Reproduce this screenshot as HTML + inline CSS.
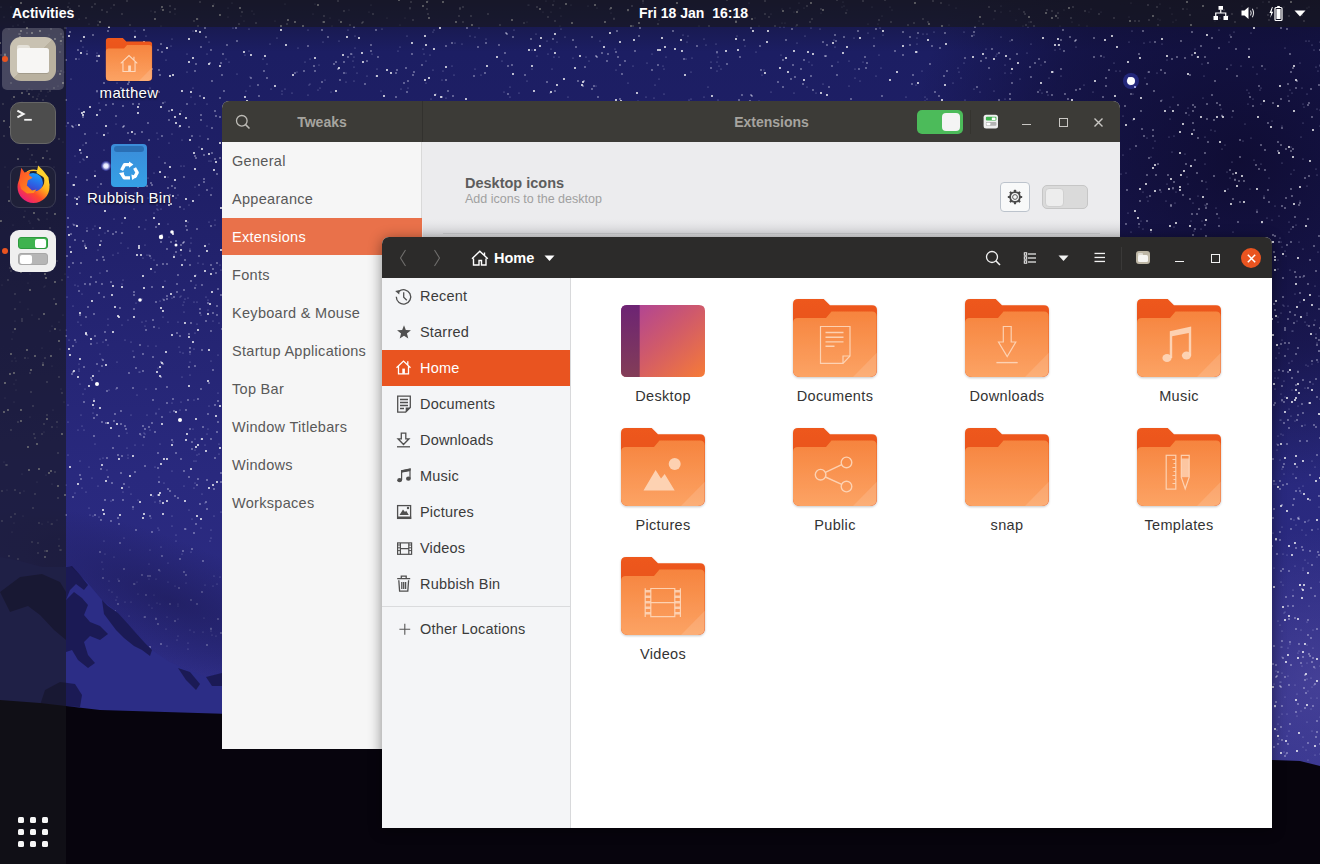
<!DOCTYPE html>
<html><head><meta charset="utf-8">
<style>
*{box-sizing:border-box;margin:0;padding:0}
html,body{width:1320px;height:864px;overflow:hidden;background:#1b1950;font-family:"Liberation Sans",sans-serif}
.abs{position:absolute}
#bg{position:absolute;left:0;top:0}
#topbar{position:absolute;left:0;top:0;width:1320px;height:27px;background:rgba(24,24,28,.62);color:#fff;font-weight:bold;font-size:14px}
#dock{position:absolute;left:0;top:27px;width:66px;height:837px;background:rgba(24,24,28,.6)}
.win{position:absolute;border-radius:7px 7px 0 0;overflow:hidden}
.t{position:absolute;white-space:nowrap}
.dlbl{width:100px;text-align:center;font-size:15px;color:#fff;letter-spacing:.3px;text-shadow:0 1px 2px rgba(0,0,0,.9)}
.lbl{width:160px;text-align:center;font-size:14.5px;color:#333;letter-spacing:.35px;margin-top:2px}
.fs{left:38px;height:36px;line-height:36px;font-size:14.5px;color:#3b3b3b;letter-spacing:.2px}
.side{left:10px;height:38px;line-height:38px;font-size:14.5px;color:#595959;letter-spacing:.3px}
</style></head>
<body>
<svg width="0" height="0" style="position:absolute">
<defs>
<linearGradient id="fb" x1="0" y1="0" x2="0" y2="1"><stop offset="0" stop-color="#ee581b"/><stop offset="1" stop-color="#e0501a"/></linearGradient>
<linearGradient id="ff" x1="0" y1="0" x2="0" y2="1"><stop offset="0" stop-color="#f6843e"/><stop offset="1" stop-color="#fca364"/></linearGradient>
<linearGradient id="dg" x1="0" y1="0" x2="1" y2="1"><stop offset="0" stop-color="#a93f9e"/><stop offset=".5" stop-color="#d05a6a"/><stop offset="1" stop-color="#f67b37"/></linearGradient>
<linearGradient id="dl" x1="0" y1="0" x2="0" y2="1"><stop offset="0" stop-color="#6d2474"/><stop offset="1" stop-color="#833d57"/></linearGradient>
<filter id="fsh" x="-10%" y="-10%" width="120%" height="125%"><feDropShadow dx="0" dy="1" stdDeviation="1.1" flood-color="#000" flood-opacity=".22"/></filter>
<symbol id="fold" viewBox="0 0 84 80" overflow="visible">
<g filter="url(#fsh)">
<path d="M0 5Q0 0 5 0H30.7L37 6.3H79Q84 6.3 84 11.3V71Q84 78 77 78H7Q0 78 0 71Z" fill="url(#fb)"/>
<path d="M0 24Q0 19 5 19H33L38.5 12.5H79Q83.6 12.5 83.6 17.5V71Q83.6 78 76.6 78H7Q0 78 0 71Z" fill="url(#ff)"/>
</g>
<path d="M84 53.5V71Q84 78 77 78H60Z" fill="#fff" fill-opacity=".13"/>
</symbol>
</defs></svg>
<svg id="bg" width="1320" height="864" viewBox="0 0 1320 864">
<defs>
<linearGradient id="sky" x1="0" y1="0" x2="0" y2="864" gradientUnits="userSpaceOnUse">
<stop offset="0" stop-color="#15163f"/>
<stop offset=".06" stop-color="#1c1e63"/>
<stop offset=".2" stop-color="#1f1f66"/>
<stop offset=".4" stop-color="#252574"/>
<stop offset=".55" stop-color="#29297e"/>
<stop offset=".75" stop-color="#2c2b82"/>
<stop offset=".88" stop-color="#34338c"/>
<stop offset="1" stop-color="#34338c"/>
</linearGradient>
<radialGradient id="dk" cx="1240" cy="160" r="330" gradientUnits="userSpaceOnUse"><stop offset="0" stop-color="#0d0a2c" stop-opacity=".85"/><stop offset=".6" stop-color="#0d0a2c" stop-opacity=".5"/><stop offset="1" stop-color="#0d0a2c" stop-opacity="0"/></radialGradient>
<radialGradient id="mw" cx="1320" cy="680" r="150" gradientUnits="userSpaceOnUse"><stop offset="0" stop-color="#5a52a8" stop-opacity=".5"/><stop offset="1" stop-color="#5a52a8" stop-opacity="0"/></radialGradient>
<radialGradient id="hz"><stop offset="0" stop-color="#1a1850" stop-opacity=".55"/><stop offset="1" stop-color="#1a1850" stop-opacity="0"/></radialGradient>
</defs>
<rect width="1320" height="864" fill="url(#sky)"/>
<rect width="1320" height="864" fill="url(#dk)"/>
<rect width="1320" height="864" fill="url(#mw)"/>
<path d="M596 86h0M187 54h0M863 62h0M823 84h0M79 19h0M308 30h0M537 56h0M934 32h0M510 97h0M282 94h0M554 57h0M1028 27h0M1001 12h0M249 51h0M401 89h0M847 10h0M434 30h0M98 21h0M241 16h0M1079 25h0M797 43h0M387 18h0M811 28h0M588 6h0M372 54h0M771 14h0M925 97h0M790 8h0M964 32h0M99 55h0M1188 74h0M112 48h0M1150 42h0M874 38h0M804 8h0M111 76h0M410 9h0M1061 76h0M1215 21h0M655 85h0M597 8h0M313 14h0M1299 12h0M1265 69h0M1087 26h0M997 54h0M1120 71h0M171 46h0M431 99h0M953 83h0M282 91h0M346 73h0M643 3h0M442 80h0M764 70h0M692 58h0M543 12h0M799 3h0M161 9h0M355 48h0M816 93h0M927 99h0M807 87h0M1176 20h0M1172 14h0M717 71h0M532 69h0M1203 98h0M664 69h0M1060 49h0M1195 49h0M244 21h0M1307 94h0M277 38h0M475 37h0M798 10h0M369 12h0M1010 41h0M1320 65h0M1005 99h0M151 11h0M339 41h0M1005 65h0M876 76h0M18 25h0M949 25h0M191 97h0M551 12h0M481 75h0M1257 74h0M994 19h0M663 66h0M1160 4h0M13 26h0M367 76h0M454 75h0M560 26h0M430 55h0M565 37h0M1076 47h0M868 33h0M486 39h0M1104 57h0M1072 22h0M718 57h0M860 81h0M111 8h0M1187 9h0M446 98h0M652 54h0M1127 81h0M1173 97h0M691 72h0M557 42h0M561 29h0M855 78h0M1204 76h0M771 92h0M785 23h0M1019 9h0M527 22h0M1049 78h0M868 24h0M352 54h0M755 18h0M1084 85h0M1132 31h0M550 93h0M1031 44h0M717 53h0M1316 67h0M475 69h0M881 68h0M745 46h0M1130 85h0M996 56h0M339 20h0M1091 9h0M821 13h0M782 9h0M1224 14h0M699 26h0M452 66h0M1318 71h0M749 3h0M611 13h0M794 12h0M381 91h0M1001 37h0M245 55h0M600 41h0M812 65h0M209 42h0M536 34h0M71 79h0M532 50h0M1089 12h0M687 42h0M320 88h0M628 11h0M719 66h0M1144 43h0M1160 20h0M267 64h0M1253 99h0M1148 72h0M1167 60h0M1290 90h0M880 28h0M97 92h0M559 57h0M376 76h0M237 74h0M246 91h0M423 49h0M1020 79h0M796 26h0M1131 3h0M193 31h0M117 83h0M922 71h0M689 100h0M318 90h0M560 8h0M1129 42h0M1249 93h0M52 41h0M325 80h0M647 63h0M479 28h0M519 93h0M355 36h0M961 78h0M1011 73h0M315 4h0M678 13h0M706 45h0M510 87h0M285 4h0M986 49h0M872 7h0M737 36h0M1261 88h0M878 24h0M980 92h0M41 71h0M717 62h0M504 92h0M407 36h0M198 19h0M349 10h0M906 97h0M974 89h0M820 29h0M1285 48h0M834 40h0M64 72h0M965 100h0M1129 17h0M1056 15h0M1162 44h0M638 101h0M1309 41h0M249 29h0M1312 45h0M232 3h0M83 47h0M527 81h0M331 92h0M784 27h0M979 21h0M721 69h0M462 44h0M528 5h0M424 54h0M27 18h0M568 97h0M659 79h0M1251 33h0M1027 53h0M666 57h0M756 52h0M1306 41h0M994 91h0M309 85h0M332 26h0M683 35h0M708 87h0M646 97h0M1284 7h0M49 35h0M1101 12h0M615 49h0M1157 73h0M275 21h0M226 59h0M805 36h0M11 7h0M1016 20h0M298 48h0M323 42h0M883 35h0M882 16h0M633 66h0M925 101h0M1320 66h0M127 80h0M1247 90h0M704 11h0M398 51h0M89 24h0M229 62h0M546 1h0M207 54h0M849 86h0M514 30h0M353 61h0M426 83h0M916 85h0M854 38h0M377 69h0M433 32h0M1041 65h0M843 2h0M552 69h0M228 8h0M1058 45h0M879 55h0M150 88h0M548 54h0M428 1h0M433 70h0M759 26h0M1060 26h0M135 31h0M1064 10h0M974 35h0M146 36h0M1048 95h0M1023 26h0M357 73h0M1241 66h0M408 88h0M1253 67h0M716 44h0M659 20h0M551 49h0M443 71h0M1288 96h0M1133 94h0M809 62h0M114 52h0M1263 2h0M686 59h0M1 7h0M688 36h0M1229 42h0M292 93h0M1158 19h0M87 51h0M1320 42h0M1197 57h0M628 83h0M69 3h0M561 16h0M271 89h0M1230 35h0M187 72h0M254 14h0M193 88h0M958 68h0M405 18h0M1250 8h0M529 5h0M60 41h0M1055 50h0M614 18h0M308 95h0M310 59h0M927 34h0M844 6h0M66 28h0M310 84h0M135 36h0M664 94h0M1292 93h0M400 25h0M1231 65h0M1300 63h0M1145 78h0M297 72h0M30 16h0M305 62h0M616 70h0M855 69h0M436 94h0M400 47h0M1309 7h0M263 59h0M547 41h0M1042 93h0M554 1h0M250 77h0M354 81h0M1288 96h0M1260 90h0M917 44h0M1314 50h0M964 63h0M1302 88h0M762 75h0M270 44h0M1170 8h0M455 43h0M79 59h0M718 100h0M892 10h0M571 5h0M330 18h0M1202 64h0M923 34h0M1116 71h0M1040 90h0M1093 92h0M285 89h0M949 5h0M704 39h0M233 28h0M1029 22h0M470 36h0M1219 30h0M228 17h0M759 101h0M119 51h0M1162 100h0M1307 8h0M781 55h0M24 22h0M691 99h0M346 82h0M1001 6h0M959 72h0M838 62h0M654 98h0M780 27h0M890 7h0M917 38h0M1234 32h0M161 26h0M849 61h0M956 8h0M172 39h0M1114 63h0M1005 73h0M214 4h0M319 65h0M794 93h0M782 23h0M252 11h0M97 53h0M52 62h0M382 29h0M1220 11h0M348 30h0M990 79h0M1010 11h0M656 9h0M573 58h0M426 61h0M354 67h0M250 86h0M502 61h0M842 7h0M354 57h0M711 62h0M166 60h0M1278 6h0M1242 6h0M835 47h0M704 97h0M586 57h0M1173 22h0M4 17h0M175 14h0M589 61h0M371 5h0M129 487h0M195 483h0M99 371h0M207 434h0M202 494h0M138 151h0M97 133h0M218 355h0M208 429h0M154 213h0M198 263h0M105 233h0M158 368h0M219 323h0M191 238h0M68 277h0M190 354h0M134 209h0M85 244h0M80 273h0M80 162h0M84 160h0M66 330h0M83 159h0M212 188h0M123 280h0M208 300h0M218 393h0M84 430h0M68 422h0M95 444h0M73 306h0M160 503h0M93 516h0M201 315h0M119 196h0M159 409h0M144 433h0M194 461h0M159 482h0M159 157h0M78 286h0M146 321h0M168 224h0M86 492h0M169 143h0M169 237h0M89 508h0M93 413h0M172 471h0M174 255h0M135 445h0M90 515h0M194 349h0M93 229h0M121 243h0M109 390h0M156 413h0M191 243h0M108 325h0M75 156h0M75 285h0M181 111h0M157 133h0M146 389h0M178 322h0M67 297h0M98 486h0M142 299h0M215 225h0M79 109h0M163 317h0M176 198h0M143 445h0M76 225h0M66 485h0M103 458h0M81 325h0M127 433h0M151 258h0M199 195h0M145 245h0M203 264h0M99 103h0M196 275h0M87 228h0M128 320h0M195 439h0M185 299h0M149 255h0M184 302h0M145 434h0M155 272h0M172 403h0M83 145h0M81 415h0M158 210h0M98 187h0M120 179h0M184 209h0M157 209h0M114 148h0M157 205h0M82 426h0M206 297h0M123 492h0M102 359h0M125 340h0M220 265h0M178 195h0M104 150h0M205 445h0M195 104h0M188 298h0M181 402h0M90 285h0M80 384h0M122 170h0M94 399h0M80 461h0M78 430h0M219 444h0M163 299h0M134 199h0M182 140h0M82 294h0M183 305h0M158 139h0M107 470h0M79 371h0M199 147h0M189 205h0M200 136h0M197 455h0M147 255h0M133 351h0M181 166h0M128 455h0M69 340h0M148 178h0M197 324h0M148 346h0M207 104h0M76 342h0M146 220h0M150 430h0M190 375h0M195 450h0M131 494h0M155 467h0M147 415h0M108 345h0M131 415h0M137 395h0M172 516h0M94 408h0M113 255h0M118 253h0M190 249h0M133 509h0M117 362h0M68 405h0M156 414h0M182 377h0M194 400h0M184 486h0M114 219h0M127 448h0M168 322h0M160 301h0M73 224h0M66 126h0M142 199h0M92 478h0M188 222h0M130 176h0M208 310h0M168 177h0M95 171h0M207 126h0M211 161h0M215 220h0M183 353h0M95 226h0M190 362h0M85 389h0M219 454h0M108 133h0M213 321h0M209 222h0M116 124h0M195 187h0M122 284h0M221 512h0M161 209h0M121 159h0M143 258h0M140 372h0M214 516h0M172 134h0M181 296h0M122 223h0M154 173h0M111 501h0M128 150h0M82 488h0M103 342h0M128 248h0M153 496h0M160 444h0M79 364h0M211 361h0M145 326h0M100 273h0M100 354h0M159 328h0M201 439h0M139 372h0M133 177h0M197 302h0M136 303h0M180 297h0M209 244h0M141 435h0M165 102h0M172 298h0M192 519h0M194 488h0M159 477h0M179 347h0M76 125h0M145 229h0M189 510h0M173 442h0M122 325h0M79 369h0M151 518h0M116 389h0M156 346h0M199 454h0M99 517h0M68 455h0M131 342h0M108 319h0M83 394h0M221 270h0M184 312h0M181 255h0M196 285h0M83 112h0M97 343h0M100 459h0M184 166h0M154 260h0M196 461h0M75 493h0M99 235h0M135 193h0M165 196h0M142 322h0M128 458h0M209 406h0M194 302h0M193 429h0M155 502h0M138 500h0M180 410h0M179 127h0M209 161h0M98 250h0M165 281h0M148 198h0M195 333h0M205 503h0M164 483h0M78 322h0M89 467h0M180 352h0M170 412h0M109 590h0M211 538h0M168 563h0M220 577h0M186 583h0M216 636h0M214 576h0M102 562h0M125 602h0M114 557h0M167 617h0M186 529h0M191 552h0M204 618h0M188 649h0M176 541h0M160 604h0M150 550h0M139 638h0M201 528h0M188 643h0M149 605h0M168 582h0M104 541h0M104 541h0M103 569h0M176 535h0M129 616h0M109 581h0M182 554h0M158 528h0M124 538h0M210 541h0M203 632h0M152 608h0M217 584h0M136 636h0M205 585h0M156 579h0M149 579h0M149 564h0M178 636h0M213 586h0M172 526h0M166 629h0M117 597h0M167 646h0M156 618h0M178 606h0M211 631h0M175 586h0M211 530h0M138 594h0M211 628h0M194 632h0M144 617h0M177 640h0M112 592h0M118 579h0M178 604h0M212 635h0M116 600h0M132 644h0M157 603h0M159 530h0M135 584h0M161 547h0M131 602h0M154 595h0M130 550h0M178 619h0M160 571h0M105 554h0M190 630h0M137 582h0M1130 149h0M1235 179h0M1211 130h0M1320 110h0M1291 229h0M1198 196h0M1219 218h0M1289 222h0M1303 159h0M1301 137h0M1185 154h0M1123 116h0M1194 231h0M1191 221h0M1175 203h0M1147 197h0M1148 201h0M1222 115h0M1151 232h0M1187 177h0M1304 107h0M1282 126h0M1228 189h0M1205 205h0M1172 152h0M1320 126h0M1272 121h0M1201 229h0M1126 173h0M1123 155h0M1269 178h0M1173 189h0M1232 117h0M1291 147h0M1245 124h0M1188 184h0M1170 119h0M1215 131h0M1205 137h0M1317 109h0M1282 163h0M1193 203h0M1294 170h0M1267 218h0M1202 221h0M1262 223h0M1264 196h0M1303 123h0M1316 169h0M1169 137h0M1279 216h0M1296 225h0M1143 229h0M1254 160h0M1300 201h0M1275 206h0M1121 174h0M1143 192h0M1222 149h0M1188 108h0M1307 186h0M1227 172h0M1303 104h0M1128 213h0M1221 109h0M1133 120h0M1155 141h0M1216 208h0M1272 220h0M1257 210h0M1153 148h0M1147 138h0M1161 192h0M1151 157h0M1205 164h0M1230 178h0M1176 192h0M1291 174h0M1189 115h0M1317 175h0M1248 104h0M1174 227h0M1141 221h0M1243 141h0M1139 227h0M1232 162h0M1170 107h0M1233 232h0M1289 232h0M1251 138h0M1131 232h0M1174 136h0M1206 182h0M1166 201h0M1206 206h0M1225 145h0M1167 184h0M1261 104h0M1207 189h0M1250 189h0M1261 164h0M1288 349h0M1282 247h0M1275 371h0M1285 697h0M1307 313h0M1318 362h0M1308 691h0M1307 679h0M1281 647h0M1305 560h0M1283 554h0M1308 760h0M1281 582h0M1303 277h0M1288 648h0M1292 331h0M1301 493h0M1311 709h0M1299 488h0M1297 321h0M1293 474h0M1291 416h0M1306 535h0M1278 269h0M1285 397h0M1284 306h0M1313 630h0M1278 436h0M1311 698h0M1316 334h0M1277 730h0M1280 682h0M1276 484h0M1303 486h0M1307 663h0M1302 666h0M1317 557h0M1305 425h0M1298 519h0M1282 673h0M1278 260h0M1319 296h0M1278 317h0M1289 409h0M1296 525h0M1303 249h0M1281 420h0M1318 529h0M1305 322h0M1312 731h0M1295 566h0M1294 520h0M1307 315h0M1306 365h0M1274 684h0M1292 361h0M1300 302h0M1287 736h0M1319 351h0M1295 685h0M1320 582h0M1307 325h0M1295 294h0M1303 570h0M1275 707h0M1297 694h0M1281 682h0M1274 568h0M1282 657h0M1282 527h0M1284 474h0M1275 378h0M1279 353h0M1282 340h0M1299 651h0M1284 752h0M1311 678h0M1285 251h0M1282 714h0M1315 286h0M1290 644h0M1289 363h0M1283 305h0M1302 530h0M1317 698h0M1278 621h0M1306 750h0M1303 747h0M1307 645h0M1281 242h0M1319 507h0M1318 252h0M1283 585h0M1287 714h0M1286 754h0M1320 399h0M1285 612h0M1277 450h0M1312 364h0M1290 270h0M1308 366h0M1312 687h0M1298 371h0M1280 460h0M1282 631h0M1308 563h0M1305 388h0M1287 555h0M1313 648h0M1273 533h0M1282 469h0M1309 606h0M1314 685h0M1301 711h0M1283 435h0M1288 306h0M1303 568h0M1276 671h0M1307 622h0M1281 434h0M1315 755h0M1297 716h0M1278 322h0M1274 484h0M1282 647h0M1284 613h0M1293 331h0M1313 384h0M1317 343h0M1299 517h0M1293 590h0M1279 717h0M1295 421h0M1292 390h0M1278 378h0M1315 467h0M1315 320h0M1307 722h0M1303 737h0M1280 420h0M1320 717h0M1286 256h0M1280 625h0M1308 521h0M1284 381h0M1315 668h0M1298 406h0M1288 676h0M1309 520h0M1280 238h0M1279 739h0M1275 389h0M1281 313h0M1320 754h0M1278 724h0M1301 630h0M1281 394h0M1312 461h0M1277 444h0M1279 348h0M1282 401h0M1276 358h0M1289 731h0M1299 242h0M1298 653h0M1320 666h0M38 262h0M42 105h0M23 231h0M14 402h0M23 516h0M47 219h0M50 141h0M52 484h0M12 361h0M52 206h0M17 111h0M57 427h0M22 102h0M42 253h0M64 402h0M51 524h0M58 71h0M59 322h0M44 432h0M12 339h0M60 349h0M58 86h0M52 326h0M14 523h0M63 315h0M16 361h0M32 315h0M34 103h0M18 257h0M30 223h0M39 94h0M48 522h0M50 331h0M24 491h0M12 532h0M9 29h0M43 77h0M38 127h0M41 177h0M53 410h0M38 235h0M61 44h0M16 390h0M13 225h0M54 167h0M14 384h0M47 89h0M30 417h0M44 287h0M45 286h0M22 474h0M29 89h0M15 358h0M47 62h0M61 389h0M37 58h0M29 233h0M13 332h0M28 358h0M46 96h0M42 524h0M42 348h0M33 228h0M42 254h0M32 90h0M65 274h0M29 221h0M25 211h0M37 251h0M2 285h0M54 198h0M30 274h0M7 490h0M18 124h0M50 207h0M57 520h0M28 283h0M60 330h0M46 475h0M28 192h0M48 92h0M51 251h0M38 96h0M5 167h0M16 380h0M59 539h0M52 190h0M52 366h0M4 462h0M63 315h0M36 240h0M46 236h0M12 99h0M46 266h0M30 159h0M37 482h0M5 398h0M20 302h0M8 187h0M15 321h0M63 142h0M28 309h0" stroke="#d8dcff" stroke-width="1.2" stroke-linecap="round" stroke-opacity=".5"/><path d="M597 57h0M1047 10h0M786 40h0M791 79h0M874 46h0M1012 40h0M620 99h0M411 2h0M933 1h0M553 39h0M555 21h0M598 97h0M1099 14h0M259 96h0M144 52h0M315 71h0M555 91h0M989 7h0M122 14h0M1219 48h0M1047 92h0M1311 89h0M304 71h0M1030 67h0M338 1h0M224 91h0M658 24h0M879 20h0M939 96h0M1085 11h0M363 22h0M505 53h0M367 61h0M25 14h0M251 78h0M832 66h0M236 28h0M811 76h0M115 94h0M1052 95h0M1290 54h0M460 8h0M452 43h0M1109 70h0M87 54h0M1215 81h0M448 91h0M693 11h0M256 23h0M162 52h0M947 71h0M1208 63h0M1192 32h0M175 9h0M128 84h0M127 58h0M930 64h0M765 14h0M102 10h0M616 52h0M1114 18h0M427 9h0M1297 81h0M1075 41h0M1161 70h0M93 35h0M65 28h0M130 25h0M750 101h0M882 96h0M1228 16h0M807 6h0M412 54h0M865 57h0M836 41h0M70 32h0M66 100h0M97 91h0M60 10h0M471 16h0M585 67h0M793 65h0M635 51h0M1035 63h0M923 19h0M727 64h0M639 36h0M1106 78h0M110 57h0M108 31h0M373 14h0M1212 95h0M578 81h0M328 37h0M118 46h0M129 82h0M446 46h0M935 92h0M999 100h0M324 16h0M903 32h0M622 74h0M413 20h0M287 24h0M1181 41h0M633 26h0M1154 91h0M1155 42h0M128 48h0M1250 97h0M410 8h0M863 1h0M940 48h0M1190 15h0M1237 76h0M620 65h0M237 41h0M43 100h0M537 7h0M1012 83h0M20 40h0M736 21h0M1192 55h0M1025 14h0M761 70h0M121 88h0M740 57h0M222 75h0M406 68h0M348 57h0M1205 57h0M992 49h0M1106 86h0M1158 25h0M1161 101h0M760 46h0M322 30h0M227 45h0M1076 40h0M914 23h0M41 91h0M428 14h0M258 85h0M404 83h0M442 97h0M548 17h0M159 70h0M239 24h0M792 29h0M508 94h0M79 6h0M592 89h0M200 2h0M1064 51h0M1031 77h0M500 25h0M912 84h0M81 41h0M1302 15h0M121 56h0M1231 37h0M1220 18h0M1235 22h0M1031 22h0M617 31h0M1139 21h0M553 5h0M27 33h0M594 86h0M344 73h0M194 21h0M1068 99h0M1034 26h0M158 50h0M506 33h0M928 22h0M267 78h0M407 92h0M159 92h0M396 73h0M95 4h0M1177 57h0M1076 90h0M507 34h0M365 84h0M1061 69h0M1 55h0M104 83h0M414 72h0M210 63h0M1063 30h0M658 65h0M1080 89h0M149 46h0M53 63h0M1148 5h0M525 75h0M334 64h0M945 33h0M1094 57h0M846 13h0M1058 13h0M354 27h0M1149 20h0M408 81h0M295 73h0M1010 99h0M891 22h0M1101 56h0M751 28h0M362 23h0M68 7h0M885 0h0M547 82h0M867 63h0M711 68h0M474 76h0M350 25h0M1236 49h0M13 14h0M513 37h0M1070 37h0M467 28h0M459 16h0M995 11h0M1073 7h0M196 64h0M813 90h0M160 75h0M576 47h0M697 46h0M783 60h0M201 47h0M974 32h0M1149 72h0M97 56h0M1157 7h0M1071 18h0M1304 21h0M739 100h0M20 34h0M170 12h0M972 36h0M155 12h0M1257 8h0M981 61h0M844 37h0M371 45h0M783 87h0M138 66h0M1183 9h0M478 47h0M1281 99h0M684 59h0M488 14h0M1038 92h0M1024 12h0M206 37h0M673 31h0M1026 25h0M596 56h0M1052 11h0M344 11h0M1224 10h0M486 43h0M508 66h0M941 3h0M643 1h0M804 60h0M242 12h0M70 9h0M778 82h0M524 23h0M1320 50h0M825 56h0M765 1h0M499 45h0M1103 97h0M205 28h0M41 44h0M264 71h0M652 70h0M195 71h0M835 35h0M86 18h0M1201 46h0M211 50h0M200 96h0M1010 59h0M910 37h0M803 84h0M709 26h0M378 57h0M640 28h0M308 46h0M1269 20h0M118 91h0M144 30h0M1288 84h0M463 22h0M20 78h0M63 37h0M198 26h0M314 66h0M323 22h0M735 14h0M92 7h0M446 80h0M1165 73h0M485 73h0M584 81h0M607 61h0M614 19h0M1269 2h0M220 98h0M344 62h0M908 25h0M775 26h0M618 57h0M1010 94h0M837 0h0M859 69h0M610 9h0M1281 28h0M1249 49h0M910 45h0M1053 72h0M1058 18h0M1262 66h0M1045 62h0M1289 16h0M1296 88h0M336 62h0M989 68h0M751 95h0M917 52h0M1139 54h0M999 53h0M573 40h0M161 44h0M812 19h0M1039 59h0M932 46h0M727 0h0M170 6h0M531 39h0M1259 86h0M340 80h0M592 37h0M823 42h0M821 9h0M826 56h0M895 51h0M866 68h0M1017 54h0M744 40h0M810 22h0M396 97h0M1291 72h0M986 58h0M338 69h0M453 96h0M221 63h0M876 29h0M608 54h0M752 96h0M397 70h0M1094 38h0M32 38h0M975 27h0M76 59h0M1135 21h0M371 51h0M422 65h0M625 61h0M632 6h0M918 33h0M322 82h0M376 30h0M602 53h0M1147 84h0M913 75h0M98 25h0M717 52h0M51 29h0M18 15h0M944 76h0M742 95h0M769 17h0M983 24h0M797 25h0M837 75h0M851 99h0M1190 75h0M1143 31h0M512 65h0M1293 68h0M78 50h0M37 99h0M827 45h0M463 7h0M114 5h0M223 54h0M127 1h0M1065 94h0M1172 59h0M212 81h0M829 87h0M977 87h0M1185 58h0M1319 85h0M1268 15h0M152 69h0M1058 18h0M1131 94h0M413 75h0M965 58h0M1232 14h0M903 55h0M460 9h0M1212 38h0M1287 29h0M583 86h0M351 54h0M801 69h0M97 61h0M1061 40h0M1227 69h0M107 12h0M795 77h0M858 31h0M748 16h0M72 374h0M139 227h0M131 167h0M162 235h0M146 330h0M105 332h0M202 350h0M184 242h0M102 203h0M143 371h0M190 429h0M129 373h0M167 249h0M217 174h0M149 427h0M101 469h0M175 496h0M211 439h0M104 297h0M116 116h0M113 234h0M206 502h0M167 299h0M155 432h0M200 504h0M118 455h0M207 190h0M184 177h0M147 186h0M72 126h0M154 327h0M66 515h0M164 300h0M94 418h0M208 139h0M167 403h0M134 292h0M173 399h0M73 263h0M211 331h0M170 195h0M71 234h0M158 453h0M118 178h0M97 260h0M186 410h0M140 434h0M212 128h0M211 195h0M172 186h0M112 483h0M128 133h0M187 230h0M150 256h0M171 242h0M74 225h0M91 201h0M91 277h0M189 334h0M81 263h0M108 477h0M84 367h0M67 195h0M203 427h0M216 273h0M119 145h0M212 153h0M83 241h0M102 203h0M208 303h0M189 477h0M152 287h0M218 401h0M214 489h0M73 127h0M73 346h0M199 185h0M185 260h0M138 187h0M196 158h0M142 132h0M123 127h0M221 295h0M177 333h0M75 340h0M80 315h0M156 227h0M68 227h0M87 231h0M134 295h0M217 315h0M221 473h0M195 156h0M200 309h0M117 175h0M86 317h0M201 389h0M121 424h0M176 241h0M91 344h0M123 500h0M114 180h0M104 166h0M201 120h0M86 143h0M178 498h0M101 184h0M148 123h0M172 440h0M204 179h0M115 185h0M111 282h0M184 471h0M181 459h0M85 134h0M73 185h0M130 140h0M208 414h0M180 336h0M135 472h0M69 267h0M79 197h0M211 226h0M152 423h0M114 421h0M102 422h0M122 456h0M133 507h0M154 194h0M152 185h0M199 256h0M190 352h0M95 515h0M73 372h0M120 308h0M102 284h0M121 473h0M176 252h0M177 284h0M161 362h0M202 285h0M68 123h0M217 432h0M117 388h0M103 257h0M178 275h0M141 185h0M75 240h0M118 518h0M97 364h0M151 183h0M190 348h0M97 415h0M95 336h0M67 256h0M106 105h0M107 271h0M187 104h0M113 448h0M180 207h0M133 388h0M143 354h0M87 335h0M123 106h0M169 120h0M156 302h0M90 284h0M133 201h0M116 232h0M218 289h0M191 281h0M68 218h0M207 509h0M207 480h0M101 241h0M170 491h0M160 501h0M73 497h0M161 377h0M96 282h0M91 378h0M176 453h0M217 306h0M165 163h0M103 360h0M108 231h0M195 366h0M163 364h0M113 177h0M88 307h0M177 292h0M222 329h0M190 265h0M183 243h0M126 429h0M134 357h0M81 479h0M168 188h0M217 263h0M184 290h0M200 313h0M198 399h0M94 314h0M99 293h0M105 500h0M167 296h0M83 117h0M106 423h0M175 188h0M68 173h0M125 195h0M139 104h0M136 368h0M158 495h0M134 309h0M186 226h0M92 380h0M215 458h0M189 127h0M215 111h0M150 516h0M153 320h0M213 313h0M191 323h0M190 251h0M209 383h0M104 260h0M113 104h0M125 426h0M198 479h0M145 429h0M157 265h0M122 233h0M143 426h0M136 173h0M216 116h0M213 269h0M163 103h0M144 437h0M121 411h0M192 442h0M84 402h0M159 482h0M174 411h0M156 194h0M94 436h0M211 265h0M107 391h0M107 458h0M220 117h0M162 417h0M197 229h0M215 405h0M113 500h0M106 340h0M124 126h0M201 115h0M181 245h0M76 177h0M215 159h0M149 140h0M206 321h0M168 489h0M70 247h0M140 345h0M195 288h0M79 291h0M87 180h0M133 104h0M161 242h0M81 153h0M129 147h0M80 475h0M169 111h0M115 414h0M189 367h0M218 422h0M119 436h0M204 155h0M156 389h0M220 158h0M100 110h0M188 400h0M85 284h0M204 182h0M221 482h0M135 134h0M75 198h0M192 136h0M145 466h0M153 400h0M153 357h0M167 264h0M174 297h0M158 468h0M162 136h0M213 370h0M102 366h0M124 484h0M167 387h0M163 264h0M197 485h0M192 449h0M85 246h0M115 643h0M100 552h0M118 604h0M203 561h0M218 619h0M186 575h0M103 578h0M192 549h0M197 604h0M221 633h0M158 624h0M119 524h0M115 611h0M152 532h0M150 576h0M184 572h0M124 633h0M207 645h0M161 644h0M211 629h0M196 524h0M120 543h0M156 619h0M191 600h0M124 569h0M101 520h0M134 584h0M170 604h0M145 617h0M142 575h0M202 592h0M150 647h0M159 570h0M194 533h0M162 556h0M148 576h0M111 521h0M179 588h0M136 530h0M175 621h0M146 595h0M183 551h0M119 581h0M180 559h0M185 529h0M1197 214h0M1147 175h0M1308 105h0M1195 229h0M1265 150h0M1168 175h0M1207 204h0M1186 164h0M1273 235h0M1305 178h0M1239 181h0M1214 120h0M1256 165h0M1309 103h0M1230 170h0M1171 205h0M1240 202h0M1240 140h0M1217 214h0M1233 174h0M1217 103h0M1299 205h0M1193 105h0M1139 224h0M1291 189h0M1178 105h0M1173 188h0M1293 227h0M1233 199h0M1281 145h0M1257 212h0M1278 151h0M1156 175h0M1147 221h0M1269 202h0M1206 208h0M1240 157h0M1171 206h0M1285 208h0M1205 225h0M1190 199h0M1264 198h0M1259 169h0M1202 181h0M1140 201h0M1293 149h0M1235 180h0M1214 176h0M1192 214h0M1195 107h0M1308 219h0M1127 190h0M1144 136h0M1153 130h0M1292 196h0M1206 236h0M1193 123h0M1265 170h0M1136 146h0M1186 113h0M1174 182h0M1195 160h0M1193 111h0M1205 153h0M1194 130h0M1158 164h0M1244 181h0M1295 217h0M1207 104h0M1150 196h0M1199 209h0M1160 190h0M1220 105h0M1125 106h0M1268 190h0M1238 222h0M1300 203h0M1291 151h0M1141 111h0M1197 173h0M1282 128h0M1193 235h0M1268 123h0M1282 206h0M1319 236h0M1219 226h0M1253 106h0M1289 101h0M1286 149h0M1153 136h0M1207 119h0M1275 236h0M1222 116h0M1142 129h0M1309 176h0M1233 111h0M1208 142h0M1149 158h0M1183 195h0M1278 142h0M1273 103h0M1198 138h0M1312 117h0M1126 224h0M1261 145h0M1286 198h0M1294 499h0M1274 405h0M1311 638h0M1296 478h0M1289 343h0M1303 380h0M1276 677h0M1319 496h0M1316 427h0M1291 529h0M1307 441h0M1273 664h0M1314 667h0M1291 242h0M1278 744h0M1298 372h0M1293 606h0M1310 260h0M1320 328h0M1282 706h0M1289 619h0M1296 385h0M1295 618h0M1277 554h0M1305 522h0M1317 721h0M1315 684h0M1290 642h0M1284 402h0M1298 704h0M1274 252h0M1308 388h0M1287 245h0M1297 420h0M1287 484h0M1285 356h0M1317 360h0M1283 658h0M1274 304h0M1300 277h0M1288 420h0M1319 340h0M1306 693h0M1287 444h0M1281 571h0M1275 403h0M1319 351h0M1273 459h0M1287 753h0M1300 441h0M1314 246h0M1285 343h0M1315 596h0M1313 658h0M1303 550h0M1282 400h0M1296 277h0M1314 425h0M1277 676h0M1283 485h0M1304 688h0M1276 702h0M1309 326h0M1274 509h0M1300 585h0M1297 467h0M1304 276h0M1316 338h0M1296 491h0M1273 242h0M1317 455h0M1301 663h0M1319 309h0M1278 445h0M1305 675h0M1311 588h0M1314 325h0M1312 530h0M1312 662h0M1295 272h0M1317 397h0M1273 518h0M1280 686h0M1310 382h0M1283 297h0M1305 680h0M1308 284h0M1283 467h0M1296 548h0M1285 328h0M1305 708h0M1291 665h0M1276 540h0M1280 481h0M1279 370h0M1291 519h0M1302 589h0M1274 481h0M1320 744h0M1290 312h0M1284 464h0M1310 475h0M1278 672h0M1291 665h0M1280 489h0M1283 278h0M1293 505h0M1296 354h0M1308 620h0M1274 747h0M1303 657h0M1280 540h0M1317 732h0M1312 361h0M1293 596h0M1282 386h0M1281 687h0M1288 606h0M1275 310h0M1282 505h0M1283 569h0M1317 629h0M1320 438h0M1310 551h0M1276 665h0M1288 372h0M1308 743h0M1274 646h0M1300 293h0M1300 491h0M1286 597h0M1290 724h0M1295 315h0M1272 546h0M1288 744h0M1298 518h0M1282 641h0M1312 565h0M1281 727h0M1279 242h0M1302 404h0M1299 519h0M1284 423h0M1316 379h0M1280 532h0M1310 656h0M1298 415h0M1316 271h0M1282 740h0M1318 552h0M1283 371h0M1281 344h0M1296 712h0M1309 654h0M1308 635h0M1285 756h0M1292 378h0M1303 413h0M1310 500h0M1289 571h0M1316 737h0M1302 547h0M1313 706h0M1299 644h0M1285 677h0M1309 403h0M1298 348h0M1302 426h0M1317 345h0M1288 319h0M1294 323h0M1296 629h0M1289 428h0M1289 685h0M1319 555h0M1285 330h0M10 268h0M45 551h0M35 438h0M11 430h0M35 494h0M9 556h0M59 546h0M61 34h0M46 106h0M4 136h0M33 97h0M28 250h0M52 524h0M62 393h0M60 52h0M6 465h0M66 60h0M39 319h0M28 149h0M50 228h0M5 383h0M32 542h0M62 280h0M47 415h0M15 309h0M50 91h0M53 108h0M18 422h0M19 34h0M44 424h0M54 299h0M5 54h0M46 113h0M22 319h0M24 169h0M22 321h0M38 219h0M25 358h0M20 493h0M5 251h0M11 83h0M45 358h0M61 71h0M38 543h0M47 213h0M15 56h0M50 159h0M57 422h0M39 220h0M43 116h0M15 514h0M31 392h0M26 44h0M58 453h0M33 406h0M43 363h0M30 373h0M27 142h0M27 91h0M52 427h0M55 189h0M47 382h0M24 217h0M11 271h0M38 553h0M11 517h0M42 434h0M42 185h0M33 508h0M59 377h0M42 56h0M50 134h0M3 104h0M30 255h0M15 294h0M34 434h0M18 559h0M61 550h0M39 523h0M54 88h0M8 280h0M32 155h0M2 491h0M57 261h0M58 498h0M60 550h0M7 465h0M2 521h0M59 139h0M36 162h0M47 151h0M55 472h0M15 490h0M66 336h0" stroke="#eef" stroke-width="1.6" stroke-linecap="round" stroke-opacity=".75"/><path d="M244 52h0M582 85h0M677 3h0M1052 18h0M1141 98h0M247 101h0M281 26h0M20 37h0M209 64h0M167 48h0M1294 66h0M1140 58h0M513 74h0M604 47h0M189 62h0M1162 39h0M945 85h0M753 31h0M712 96h0M497 57h0M566 4h0M621 101h0M580 56h0M843 53h0M339 68h0M275 86h0M681 40h0M425 36h0M658 50h0M31 64h0M813 54h0M843 53h0M49 56h0M752 19h0M133 90h0M446 67h0M240 8h0M726 51h0M1069 8h0M1280 86h0M555 53h0M797 12h0M363 62h0M823 10h0M1059 45h0M487 66h0M610 33h0M100 22h0M426 45h0M605 22h0M32 68h0M512 20h0M768 31h0M324 22h0M827 95h0M1207 35h0M1058 39h0M1052 72h0M191 92h0M173 75h0M109 27h0M109 76h0M435 95h0M637 93h0M1296 80h0M1041 83h0M942 26h0M808 52h0M942 100h0M315 58h0M189 39h0M620 42h0M1195 53h0M423 6h0M1188 74h0M425 80h0M293 75h0M162 7h0M1046 13h0M1187 2h0M1043 38h0M611 8h0M821 93h0M682 51h0M983 54h0M1029 17h0M575 68h0M343 55h0M788 72h0M1198 57h0M765 73h0M918 83h0M170 76h0M897 72h0M303 26h0M973 57h0M634 40h0M685 75h0M429 78h0M883 31h0M412 43h0M916 52h0M135 37h0M631 26h0M359 38h0M1018 63h0M341 22h0M5 55h0M377 76h0M429 18h0M1130 21h0M534 91h0M427 2h0M265 56h0M736 22h0M84 37h0M1203 6h0M662 38h0M1095 81h0M1129 78h0M811 3h0M1115 96h0M833 43h0M540 46h0M163 10h0M929 24h0M387 70h0M555 34h0M21 3h0M572 23h0M220 66h0M144 42h0M616 100h0M182 91h0M204 98h0M535 50h0M434 49h0M1249 57h0M595 5h0M81 53h0M639 23h0M783 11h0M472 25h0M928 40h0M675 49h0M980 17h0M860 38h0M903 46h0M1112 36h0M946 44h0M155 19h0M46 71h0M288 20h0M1153 16h0M1128 62h0M1056 16h0M564 79h0M456 22h0M99 56h0M399 0h0M39 58h0M114 70h0M915 3h0M804 80h0M197 19h0M786 58h0M890 80h0M122 69h0M362 53h0M22 93h0M245 97h0M138 49h0M1291 2h0M220 15h0M767 42h0M738 50h0M529 50h0M336 91h0M200 32h0M384 96h0M440 28h0M69 36h0M1135 87h0M1006 56h0M1191 25h0M532 66h0M540 9h0M443 2h0M391 73h0M281 30h0M1105 40h0M994 59h0M1254 28h0M193 58h0M196 31h0M583 82h0M295 22h0M1012 69h0M32 33h0M466 99h0M551 92h0M21 31h0M1117 47h0M251 55h0M1055 45h0M665 47h0M42 80h0M286 45h0M1072 100h0M441 97h0M736 39h0M660 50h0M541 38h0M780 68h0M347 37h0M847 47h0M557 85h0M628 10h0M213 6h0M1167 56h0M318 5h0M794 51h0M132 132h0M193 201h0M80 313h0M162 424h0M180 114h0M122 488h0M93 376h0M170 167h0M202 439h0M154 218h0M108 423h0M187 434h0M113 286h0M77 204h0M151 269h0M190 140h0M122 287h0M171 294h0M206 451h0M196 447h0M214 170h0M180 126h0M86 333h0M159 495h0M86 248h0M185 501h0M198 445h0M172 110h0M120 515h0M208 381h0M138 107h0M160 172h0M163 514h0M97 115h0M119 459h0M130 476h0M197 516h0M91 339h0M100 228h0M133 456h0M207 251h0M175 117h0M117 424h0M216 416h0M82 113h0M209 488h0M135 153h0M93 405h0M139 246h0M87 157h0M106 481h0M113 332h0M145 162h0M161 464h0M172 445h0M157 372h0M100 245h0M90 107h0M205 246h0M160 493h0M198 330h0M172 335h0M159 224h0M140 502h0M94 401h0M166 352h0M112 295h0M100 408h0M122 162h0M143 518h0M69 349h0M160 367h0M182 265h0M202 149h0M119 317h0M103 510h0M132 161h0M115 307h0M167 459h0M83 115h0M173 196h0M89 386h0M163 287h0M173 234h0M69 235h0M77 199h0M186 199h0M186 221h0M143 276h0M220 448h0M169 205h0M186 440h0M195 276h0M77 226h0M106 126h0M160 376h0M102 465h0M164 459h0M139 248h0M84 112h0M211 274h0M138 113h0M120 203h0M174 257h0M210 304h0M134 317h0M212 292h0M111 428h0M151 495h0M191 469h0M176 412h0M92 301h0M118 316h0M78 377h0M220 406h0M217 482h0M193 342h0M196 419h0M163 503h0M70 355h0M86 334h0M141 255h0M185 323h0M213 485h0M126 162h0M176 123h0M165 177h0M95 176h0M106 365h0M189 386h0M162 363h0M79 125h0M216 162h0M209 350h0M137 255h0M113 181h0M80 359h0M195 169h0M70 467h0M208 314h0M189 337h0M74 185h0M167 501h0M209 154h0M175 180h0M161 107h0M181 250h0M201 519h0M104 514h0M205 271h0M163 311h0M221 208h0M78 484h0M221 250h0M144 288h0M74 371h0M104 135h0M161 308h0M105 211h0M171 204h0M220 143h0M71 252h0M125 218h0M194 153h0M80 150h0M144 514h0M186 118h0M1155 191h0M1181 175h0M1180 153h0M1203 197h0M1220 142h0M1138 218h0M1180 190h0M1300 187h0M1289 147h0M1206 220h0M1223 117h0M1171 179h0M1165 111h0M1140 189h0M1236 173h0M1264 101h0M1237 186h0M1183 124h0M1231 204h0M1192 134h0M1176 223h0M1153 168h0M1293 157h0M1217 117h0M1151 230h0M1306 226h0M1294 204h0M1244 202h0M1225 191h0M1258 117h0M1310 161h0M1184 171h0M1271 127h0M1201 117h0M1134 119h0M1180 132h0M1180 187h0M1262 222h0M1135 211h0M1279 153h0M1191 166h0M1126 125h0M1278 106h0M1313 130h0M1190 226h0M1146 184h0M1155 165h0M1294 111h0M1170 226h0M1173 111h0M1169 189h0M1242 176h0M1257 189h0M1275 260h0M1276 301h0M1283 607h0M1273 242h0M1303 461h0M1303 590h0M1296 398h0M1278 487h0M1286 662h0M1304 585h0M1296 700h0M1287 398h0M1275 270h0M1292 402h0M1305 644h0M1295 543h0M1297 751h0M1275 729h0M1298 619h0M1288 655h0M1306 674h0M1296 456h0M1278 736h0M1317 659h0M1300 585h0M1292 555h0M1285 620h0M1275 257h0M1283 254h0M1286 741h0M1308 573h0M1299 393h0M1299 733h0M1315 746h0M1276 539h0M1304 494h0M1277 345h0M1272 319h0M1308 499h0M1310 295h0M1319 414h0M1302 598h0M1298 658h0M1303 652h0M1311 334h0M1298 258h0M1316 481h0M1298 619h0M1312 390h0M1310 403h0M1273 335h0M1295 400h0M1301 317h0M1275 706h0M1317 681h0M1317 520h0M1307 705h0M1298 384h0M1285 458h0M1285 412h0M1304 300h0M1296 284h0M1289 546h0M1276 316h0M1290 370h0M1296 390h0M1273 687h0M1297 307h0M1287 511h0M1312 305h0M1320 478h0M1274 587h0M1274 384h0M1281 444h0M1295 464h0M1281 753h0M1281 506h0M1289 616h0M1 221h0M46 278h0M47 419h0M49 122h0M43 158h0M55 329h0M44 314h0M51 173h0M51 356h0M58 486h0M49 473h0M51 471h0M14 129h0M29 470h0M61 41h0M4 412h0M27 28h0M40 31h0M62 434h0M60 74h0M47 551h0M59 341h0M35 356h0M31 370h0M24 179h0M55 39h0M11 354h0M39 469h0M21 421h0M0 43h0M34 213h0M63 83h0M27 350h0M5 383h0M28 447h0M10 127h0M45 274h0M16 234h0M24 267h0M45 557h0M10 374h0M51 105h0M43 365h0M42 76h0M55 282h0M29 94h0M21 410h0M37 444h0M41 177h0M15 329h0M30 290h0M14 373h0M8 410h0M18 159h0M55 214h0M65 495h0M14 97h0M4 121h0M46 129h0M14 197h0M9 201h0M21 272h0M34 58h0M56 304h0" stroke="#fff" stroke-width="2.1" stroke-linecap="round" stroke-opacity=".9"/><circle cx="1131" cy="81" r="8" fill="#4a5aff" fill-opacity=".3"/><g fill="#fff"><circle cx="1131" cy="81" r="4"/><circle cx="97" cy="384" r="2"/><circle cx="180" cy="420" r="2"/><circle cx="161" cy="237" r="2.2"/><circle cx="140" cy="300" r="1.8"/><circle cx="172" cy="232" r="1.8"/><circle cx="176" cy="245" r="1.5"/></g>
<ellipse cx="170" cy="600" rx="200" ry="60" fill="url(#hz)" transform="rotate(22 170 600)"/>
<path d="M0 557L20 561L42 567L62 567L70 566L87 582L102 600L118 613L135 632L152 650L168 661L185 669L206 677L222 673L400 690L400 720L0 720Z" fill="#2c2d86"/>
<g fill="#141240" fill-opacity=".7">
<path d="M66 567L72 566L80 575L88 585L84 590L76 584L70 590L66 600Z"/>
<path d="M66 600L74 592L82 598L88 605L84 615L90 622L100 626L108 634L100 640L90 636L84 642L88 655L95 663L88 668L78 660L72 650L66 652Z"/>
<path d="M102 600L108 606L118 613L128 624L135 632L145 643L152 650L150 656L142 650L134 646L124 638L116 630L110 622L104 614Z"/>
<path d="M178 668L190 672L200 684L196 690L186 680Z"/>
<path d="M206 677L222 673L222 686L212 686Z"/>
<path d="M0 592L20 577L42 574L60 582L66 592L66 640L54 630L40 615L28 606L10 612Z"/>
<path d="M40 705L45 690L60 682L75 684L82 695L80 707Z"/>
</g>
<path d="M0 700L40 703L100 710L230 714L400 717L900 730L1240 770L1272 760L1300 761L1320 766L1320 864L0 864Z" fill="#07040d"/>
</svg>

<div id="topbar">
<div class="t" style="left:12px;top:5px">Activities</div>
<div class="t" style="left:639px;top:5px">Fri 18 Jan&nbsp; 16:18</div>
<svg class="abs" style="left:1212px;top:5px" width="18" height="16" viewBox="0 0 18 16"><g fill="#fff"><rect x="6.5" y="1" width="4.5" height="3.8"/><rect x="1.5" y="11" width="4.5" height="4"/><rect x="11.5" y="11" width="4.5" height="4"/></g><path d="M8.75 4.5V8M3.75 11V8H13.75V11" fill="none" stroke="#fff" stroke-width="1.2"/></svg>
<svg class="abs" style="left:1240px;top:5px" width="17" height="16" viewBox="0 0 17 16"><path d="M1.5 5.5H4.5L8.5 2V14L4.5 10.5H1.5Z" fill="#fff"/><path d="M10.5 5.5Q12 8 10.5 10.5M12.3 3.8Q14.8 8 12.3 12.2" fill="none" stroke="#fff" stroke-width="1.1" stroke-opacity=".85"/></svg>
<svg class="abs" style="left:1267px;top:4px" width="18" height="18" viewBox="0 0 18 18"><path d="M5 3L2.5 9H4.2L3.2 14L6.2 7.8H4.5L5.8 3Z" fill="#fff"/><rect x="8" y="3.5" width="7" height="13" rx="1" fill="none" stroke="#fff" stroke-width="1.2"/><rect x="10.2" y="2" width="2.6" height="1.6" fill="#fff"/><rect x="9.4" y="5" width="4.2" height="10" fill="#fff"/></svg>
<svg class="abs" style="left:1294px;top:10px" width="12" height="7" viewBox="0 0 12 7"><path d="M0.5 0.5H11.5L6 6.5Z" fill="#fff"/></svg>
</div>

<div id="dock">
 <div class="abs" style="left:2px;top:1px;width:62px;height:62px;border-radius:5px;background:rgba(255,255,255,.2)"></div>
 <div class="abs" style="left:2px;top:29px;width:6px;height:6px;border-radius:50%;background:#e95420"></div>
 <div class="abs" style="left:10px;top:10px;width:46px;height:44px;border-radius:11px;background:linear-gradient(135deg,#c9c2b2 50%,#b9b19f 50%)"></div>
 <div class="abs" style="left:17px;top:18px;width:13px;height:6px;border-radius:2px 3px 0 0;background:#e4e1d9"></div>
 <div class="abs" style="left:17px;top:21px;width:32px;height:25px;border-radius:2.5px;background:#f7f6f4;box-shadow:0 1px 0 rgba(0,0,0,.12)"></div>
 <div class="abs" style="left:10px;top:75px;width:46px;height:42px;border-radius:10px;background:#4d4d4d;border:1px solid #666"></div>
 <svg class="abs" style="left:0;top:75px" width="60" height="30" viewBox="0 75 60 30"><path d="M17.4 83.6L23.6 87L17.4 90.4" fill="none" stroke="#f4f4f4" stroke-width="2"/><path d="M24.2 92.8H31.8" stroke="#f4f4f4" stroke-width="1.8"/></svg>
 <div class="abs" style="left:10px;top:139px;width:46px;height:42px;border-radius:9px;background:#1f2038;border:1px solid #3a3b52"></div>
 <svg class="abs" style="left:8px;top:135px" width="50" height="50" viewBox="0 0 50 50">
  <defs><linearGradient id="fxr" x1=".85" y1=".1" x2=".2" y2=".95"><stop offset="0" stop-color="#ffe23c"/><stop offset=".35" stop-color="#ffb21c"/><stop offset=".65" stop-color="#ff4a2a"/><stop offset="1" stop-color="#e81a7e"/></linearGradient>
  <linearGradient id="fxg" x1=".7" y1="0" x2=".3" y2="1"><stop offset="0" stop-color="#17a0ff"/><stop offset=".6" stop-color="#2f5ce0"/><stop offset="1" stop-color="#5a2bb0"/></linearGradient>
  <linearGradient id="fxh" x1="0" y1="0" x2="1" y2="1"><stop offset="0" stop-color="#ff4a2a"/><stop offset="1" stop-color="#ff9a1a"/></linearGradient></defs>
  <circle cx="25" cy="21" r="10" fill="url(#fxg)"/>
  <path d="M9.5 25A16 16 0 1 0 41.5 25A16 16 0 1 0 9.5 25ZM14.3 18.5A11 11 0 1 1 36.3 18.5A11 11 0 1 1 14.3 18.5Z" fill="url(#fxr)" fill-rule="evenodd"/>
  <path d="M11 19L13.3 5.8L16.5 10.5L22.5 9.2L20.8 13L24.5 15.8L19.8 18.5L18.8 23.5L24 28.5L28.5 27.5L25.5 31L19 31.5L13 27Z" fill="url(#fxh)"/>
  <path d="M28.5 11L30.2 3.5L35.5 9L40.5 15.5L41.5 24L38.5 18L34.5 14.5Z" fill="#ffd22e"/>
 </svg>
 <div class="abs" style="left:10px;top:203px;width:46px;height:42px;border-radius:9px;background:#efefef"></div>
 <div class="abs" style="left:18px;top:210px;width:30px;height:12px;border-radius:3px;background:#3fb34f;border:1px solid #2e9a3e"></div>
 <div class="abs" style="left:35px;top:211.5px;width:11px;height:9px;border-radius:2px;background:#fff"></div>
 <div class="abs" style="left:18px;top:226px;width:30px;height:12px;border-radius:3px;background:#b6b6b6;border:1px solid #a8a8a8"></div>
 <div class="abs" style="left:20px;top:227.5px;width:12px;height:9px;border-radius:2px;background:#fff"></div>
 <div class="abs" style="left:2px;top:221px;width:6px;height:6px;border-radius:50%;background:#e95420"></div>
 <svg class="abs" style="left:18px;top:790px" width="32" height="32" viewBox="0 0 32 32"><g fill="#f6f6f6"><rect x="0" y="0" width="6" height="6" rx="1.5"/><rect x="12" y="0" width="6" height="6" rx="1.5"/><rect x="24" y="0" width="6" height="6" rx="1.5"/><rect x="0" y="12" width="6" height="6" rx="1.5"/><rect x="12" y="12" width="6" height="6" rx="1.5"/><rect x="24" y="12" width="6" height="6" rx="1.5"/><rect x="0" y="24" width="6" height="6" rx="1.5"/><rect x="12" y="24" width="6" height="6" rx="1.5"/><rect x="24" y="24" width="6" height="6" rx="1.5"/></g></svg>
</div>
<svg class="abs" style="left:105px;top:38px" width="48" height="44" viewBox="0 0 84 80"><use href="#fold"/><g fill="none" stroke="#fdd8bd" stroke-width="2"><path d="M27 46L42 32L57 46M31 43V61H53V43M51 34V40"/></g><rect x="40.5" y="50" width="5" height="11" fill="#fdd8bd"/></svg>
<div class="t dlbl" style="left:79px;top:84px">matthew</div>
<div class="abs" style="left:111px;top:143.5px;width:36px;height:43px;border-radius:4px;background:linear-gradient(#3b8cd9,#35a0e6)"></div>
<div class="abs" style="left:114px;top:146px;width:30px;height:6px;border-radius:3px;background:#2a6fb5"></div>
<svg class="abs" style="left:117px;top:160px" width="24" height="22" viewBox="0 0 24 22"><g fill="none" stroke="#fff" stroke-width="3.3" stroke-linejoin="round"><path d="M4.6 10.2L7.6 4.6H12"/><path d="M17.6 8L20.2 12.6L17.4 17.4"/><path d="M13 17.8H7.2L4.6 13.4"/></g><g fill="#fff"><path d="M12 1.4L16.4 4.6L12 7.8Z"/><path d="M20.4 16.2L15.2 20L14.4 14.6Z"/><path d="M2 13L7.2 12.2L5.6 17.4Z" transform="rotate(0)"/></g></svg>
<div class="abs" style="left:101px;top:161px;width:10px;height:10px;border-radius:50%;background:radial-gradient(#fff 0,#dfe3ff 30%,rgba(120,130,255,.4) 60%,rgba(80,90,255,0) 100%)"></div>
<div class="t dlbl" style="left:69px;top:189px;width:120px">Rubbish Bin</div>

<!-- TWEAKS -->
<div class="win" style="left:222px;top:101px;width:898px;height:648px;background:#ececee">
 <div class="abs" style="left:0;top:0;width:898px;height:41px;background:#3c3b37"></div>
 <div class="abs" style="left:200px;top:0;width:1px;height:41px;background:#32312e"></div>
 <svg class="abs" style="left:13px;top:13px" width="16" height="16" viewBox="0 0 16 16"><circle cx="6.8" cy="6.8" r="5.3" fill="none" stroke="#bdbbb6" stroke-width="1.3"/><path d="M10.6 10.6L14.5 14.5" stroke="#bdbbb6" stroke-width="1.5"/></svg>
 <div class="t" style="left:0;width:200px;text-align:center;top:13px;font-size:14px;font-weight:bold;color:#a6a49f">Tweaks</div>
 <div class="t" style="left:201px;width:697px;text-align:center;top:13px;font-size:14px;font-weight:bold;color:#a6a49f">Extensions</div>
 <div class="abs" style="left:695px;top:9px;width:46px;height:24px;border-radius:5px;background:#4cbb5a"></div>
 <div class="abs" style="left:720px;top:12px;width:18px;height:18px;border-radius:4px;background:#f4f4f4"></div>
 <div class="abs" style="left:748px;top:9px;width:1px;height:24px;background:#35342f"></div>
<svg class="abs" style="left:761px;top:13px" width="16" height="16" viewBox="761 13 16 16"><rect x="761.6" y="13.7" width="14.4" height="13.8" rx="2.5" fill="#eeeeee"/><rect x="763.9" y="15.8" width="10.5" height="3.8" rx="1" fill="#3fb34f"/><rect x="769.8" y="16.5" width="3.7" height="2.5" rx=".6" fill="#fff"/><rect x="763.9" y="21" width="10.5" height="3.8" rx="1" fill="#b4b4b4"/><rect x="764.6" y="21.7" width="3.7" height="2.5" rx=".6" fill="#fff"/></svg>
 <div class="abs" style="left:800px;top:22.8px;width:9px;height:1px;background:#c9c7c3"></div>
 <div class="abs" style="left:837px;top:17px;width:8.5px;height:8.5px;border:1.4px solid #c9c7c3"></div>
 <svg class="abs" style="left:872px;top:17px" width="9" height="9" viewBox="0 0 9 9"><path d="M0.5 0.5L8.5 8.5M8.5 0.5L0.5 8.5" stroke="#c9c7c3" stroke-width="1.4"/></svg>
 <div class="abs" style="left:0;top:41px;width:200px;height:607px;background:#f6f6f6;border-right:1px solid #d9d9d9"></div>
 <div class="abs" style="left:0;top:117px;width:200px;height:37px;background:#e9714a"></div>
 <div class="t side" style="top:41px">General</div>
 <div class="t side" style="top:79px">Appearance</div>
 <div class="t side" style="top:117px;color:#fff">Extensions</div>
 <div class="t side" style="top:155px">Fonts</div>
 <div class="t side" style="top:193px">Keyboard &amp; Mouse</div>
 <div class="t side" style="top:231px">Startup Applications</div>
 <div class="t side" style="top:269px">Top Bar</div>
 <div class="t side" style="top:307px">Window Titlebars</div>
 <div class="t side" style="top:345px">Windows</div>
 <div class="t side" style="top:383px">Workspaces</div>
 <div class="t" style="left:243px;top:74px;font-size:14.5px;font-weight:bold;color:#5d5d5d">Desktop icons</div>
 <div class="t" style="left:243px;top:91px;font-size:12.5px;color:#a0a0a0">Add icons to the desktop</div>
 <div class="abs" style="left:778px;top:81px;width:30px;height:30px;border-radius:4px;background:#f8f9f9;border:1px solid #bcc3cc"></div>
 <svg class="abs" style="left:785px;top:88px" width="16" height="16" viewBox="0 0 16 16"><g transform="translate(8 8)" fill="#4a4a4a"><rect x="-1.1" y="-7.2" width="2.2" height="2.6" rx=".5" transform="rotate(0)"/><rect x="-1.1" y="-7.2" width="2.2" height="2.6" rx=".5" transform="rotate(45)"/><rect x="-1.1" y="-7.2" width="2.2" height="2.6" rx=".5" transform="rotate(90)"/><rect x="-1.1" y="-7.2" width="2.2" height="2.6" rx=".5" transform="rotate(135)"/><rect x="-1.1" y="-7.2" width="2.2" height="2.6" rx=".5" transform="rotate(180)"/><rect x="-1.1" y="-7.2" width="2.2" height="2.6" rx=".5" transform="rotate(225)"/><rect x="-1.1" y="-7.2" width="2.2" height="2.6" rx=".5" transform="rotate(270)"/><rect x="-1.1" y="-7.2" width="2.2" height="2.6" rx=".5" transform="rotate(315)"/></g><circle cx="8" cy="8" r="4.9" fill="none" stroke="#4a4a4a" stroke-width="1.9"/><circle cx="8" cy="8" r="2.4" fill="none" stroke="#4a4a4a" stroke-width=".9"/></svg>
 <div class="abs" style="left:820px;top:84px;width:46px;height:24px;border-radius:5px;background:#dadada;border:1px solid #c6c6c6"></div>
 <div class="abs" style="left:822.5px;top:86.5px;width:19px;height:19px;border-radius:4px;background:#ededed;border:1px solid #d0d0d0"></div>
 <div class="abs" style="left:201px;top:118px;width:697px;height:18px;background:linear-gradient(#ececee,#d9d9dc)"></div>
 <div class="abs" style="left:221px;top:132px;width:657px;height:1px;background:#c9cacd"></div>
</div>

<!-- FILES -->
<div class="win" style="left:382px;top:237px;width:890px;height:591px;background:#fff;box-shadow:0 2px 14px rgba(0,0,0,.45)">
 <div class="abs" style="left:0;top:0;width:890px;height:41px;background:#2c2b2a"></div>
 <svg class="abs" style="left:17px;top:12px" width="8" height="18" viewBox="0 0 8 18"><path d="M6.5 1L1.5 9L6.5 17" fill="none" stroke="#6f6e6c" stroke-width="1.1"/></svg>
 <svg class="abs" style="left:51px;top:12px" width="8" height="18" viewBox="0 0 8 18"><path d="M1.5 1L6.5 9L1.5 17" fill="none" stroke="#6f6e6c" stroke-width="1.1"/></svg>
 <svg class="abs" style="left:89px;top:13px" width="18" height="16" viewBox="0 0 18 16"><path d="M2.5 8.5V15H8V10.5H10.5V15H15V8.5M1 8.8L8.8 1.2L16.8 8.8M13.5 2.5V5.5" fill="none" stroke="#fff" stroke-width="1.4"/></svg>
 <div class="t" style="left:112px;top:13px;font-size:14.5px;font-weight:bold;color:#fff">Home</div>
 <svg class="abs" style="left:162px;top:18px" width="11" height="7" viewBox="0 0 11 7"><path d="M0.5 0.5H10.5L5.5 6Z" fill="#fff"/></svg>
 <svg class="abs" style="left:603px;top:13px" width="17" height="17" viewBox="0 0 17 17"><circle cx="7" cy="7" r="5.5" fill="none" stroke="#f2f2f2" stroke-width="1.3"/><path d="M10.8 10.8L15 15" stroke="#f2f2f2" stroke-width="1.6"/></svg>
 <svg class="abs" style="left:641px;top:15px" width="14" height="12" viewBox="0 0 14 12"><g fill="none" stroke="#f2f2f2" stroke-width="1"><rect x="1.3" y="0.8" width="2.4" height="2.4"/><rect x="1.3" y="4.8" width="2.4" height="2.4"/><rect x="1.3" y="8.8" width="2.4" height="2.4"/></g><g fill="#f2f2f2"><rect x="5" y="1.4" width="8" height="1.2"/><rect x="5" y="5.4" width="8" height="1.2"/><rect x="5" y="9.4" width="8" height="1.2"/></g></svg>
 <svg class="abs" style="left:676px;top:18px" width="11" height="7" viewBox="0 0 11 7"><path d="M0.5 0.5H10.5L5.5 6Z" fill="#f2f2f2"/></svg>
 <svg class="abs" style="left:712px;top:15px" width="12" height="11" viewBox="0 0 12 11"><g fill="#f2f2f2"><rect x="0.5" y="0.8" width="10.5" height="1.3"/><rect x="0.5" y="4.8" width="10.5" height="1.3"/><rect x="0.5" y="8.8" width="10.5" height="1.3"/></g></svg>
 <div class="abs" style="left:739px;top:10px;width:1px;height:23px;background:#3a3938"></div>
 <div class="abs" style="left:754px;top:14px;width:14px;height:13px;border-radius:3px;background:#bdb6a5"></div>
 <div class="abs" style="left:756px;top:16px;width:5px;height:3px;border-radius:1px;background:#dedbd2"></div><div class="abs" style="left:756px;top:17.5px;width:10px;height:7.5px;border-radius:1.5px;background:#f6f5f2"></div>
 <div class="abs" style="left:793px;top:23.5px;width:9px;height:1px;background:#f2f2f2"></div>
 <div class="abs" style="left:828.5px;top:17px;width:9px;height:8.5px;border:1.4px solid #f2f2f2"></div>
 <div class="abs" style="left:859px;top:11px;width:20px;height:20px;border-radius:50%;background:#e95420"></div>
 <svg class="abs" style="left:864.5px;top:16.5px" width="9" height="9" viewBox="0 0 9 9"><path d="M0.8 0.8L8.2 8.2M8.2 0.8L0.8 8.2" stroke="#fff" stroke-width="1.5"/></svg>
 <div class="abs" style="left:0;top:41px;width:189px;height:550px;background:#f4f5f7;border-right:1px solid #d8d9db"></div>
 <div class="abs" style="left:0;top:113px;width:188px;height:36px;background:#e95420"></div>
 <div class="abs" style="left:0;top:369px;width:188px;height:1px;background:#dadbdd"></div>
 <div class="t fs" style="top:41px">Recent</div>
 <div class="t fs" style="top:77px">Starred</div>
 <div class="t fs" style="top:113px;color:#fff">Home</div>
 <div class="t fs" style="top:149px">Documents</div>
 <div class="t fs" style="top:185px">Downloads</div>
 <div class="t fs" style="top:221px">Music</div>
 <div class="t fs" style="top:257px">Pictures</div>
 <div class="t fs" style="top:293px">Videos</div>
 <div class="t fs" style="top:329px">Rubbish Bin</div>
 <div class="t fs" style="top:374px">Other Locations</div>
 <svg class="abs" style="left:0;top:0" width="188" height="420" viewBox="0 0 188 420">
<g transform="translate(0 3.8)"> <g fill="none" stroke="#505050" stroke-width="1.3">
  <path d="M16.8 50.6A7.2 7.2 0 1 1 14.3 56"/>
  <path d="M21.7 51.5V56.5L24.8 59.5"/>
 </g>
 <path d="M13.2 50.3L17.8 49.2L17.2 53.6Z" fill="#505050"/></g>
 <path d="M22.00 88.30L23.82 93.09L28.94 93.34L24.95 96.56L26.29 101.51L22.00 98.70L17.71 101.51L19.05 96.56L15.06 93.34L20.18 93.09Z" fill="#505050"/>
 <g transform="translate(0 9.3)"><g fill="none" stroke="#fff" stroke-width="1.3"><path d="M14.5 121.5L21.5 114.8L28.5 121.5M16.5 119.8V127.5H26.5V119.8M25.8 115V118.5"/></g>
 <rect x="20.3" y="122.3" width="2.6" height="5.2" fill="#fff"/></g>
 <g fill="none" stroke="#505050" stroke-width="1.3"><path d="M15.7 159.2H28.3V170.5L23.7 175.2H15.7Z"/><path d="M18 162.5H26M18 165.5H26M18 168.5H26M18 171.5H22"/></g>
 <path d="M28.3 170.5L23.7 175.2V170.5Z" fill="#505050"/>
 <g fill="none" stroke="#505050" stroke-width="1.3"><path d="M19.3 196.2H23.8V201.8H27L21.5 207.5L16 201.8H19.3Z"/><path d="M15 209.8H28"/></g>
 <g fill="#505050"><ellipse cx="17.6" cy="243.2" rx="2.4" ry="2.1"/><ellipse cx="26.4" cy="241.7" rx="2.4" ry="2.1"/><path d="M19 243V233.5L28.6 231.5V241.5H27.4V234.2L20.2 235.6V243Z"/><path d="M19 233.2L28.7 231.2V233.6L19 235.6Z"/></g>
 <g><rect x="15.6" y="268.6" width="13" height="12.8" fill="none" stroke="#505050" stroke-width="1.3"/><rect x="15" y="279.5" width="14.2" height="2.5" fill="#505050"/><path d="M17.5 278L21 272.5L23 275L24.2 273.8L26.8 278Z" fill="#505050"/><circle cx="26" cy="271" r="1.2" fill="#505050"/></g>
 <g fill="none" stroke="#505050" stroke-width="1.2"><rect x="15.6" y="305.9" width="14" height="11.4"/><path d="M18.4 305.9V317.3M26.8 305.9V317.3M18.4 311.6H26.8"/></g>
 <g fill="#505050"><rect x="15.6" y="307.5" width="2.8" height="1"/><rect x="15.6" y="310.3" width="2.8" height="1"/><rect x="15.6" y="313.1" width="2.8" height="1"/><rect x="26.8" y="307.5" width="2.8" height="1"/><rect x="26.8" y="310.3" width="2.8" height="1"/><rect x="26.8" y="313.1" width="2.8" height="1"/></g>
 <g fill="none" stroke="#505050" stroke-width="1.3"><path d="M15.2 341.6H28.2M19.3 341.3V339.2H24.2V341.3M16.8 343.2L17.6 354.2H25.8L26.6 343.2M19.8 345V352M21.7 345V352M23.6 345V352"/></g>
 <path d="M17.4 392.3H28.2M22.8 386.8V397.7" stroke="#555" stroke-width="1.1"/>
</svg>
 <svg class="abs" style="left:239px;top:62px" width="84" height="80" viewBox="0 0 84 80"><path d="M6 6H78Q84 6 84 12V72Q84 78 78 78H6Q0 78 0 72V12Q0 6 6 6Z" fill="url(#dg)"/><path d="M6 6H18.7V78H6Q0 78 0 72V12Q0 6 6 6Z" fill="url(#dl)"/></svg>
 <div class="t lbl" style="left:201px;top:149px">Desktop</div>
 <svg class="abs" style="left:411px;top:62px;overflow:visible" width="84" height="80" viewBox="0 0 84 80"><use href="#fold"/><g fill="none" stroke="#fdd8bd" stroke-width="1.2" stroke-opacity=".9"><path d="M27.5 27.5H57V57L50 64.3H27.5Z"/><path d="M57 57H50V64.3"/><path d="M32.5 33.5H50.5M32.5 38.2H50.5M32.5 42.9H50.5M32.5 47.3H41.5" stroke-width="1.4"/></g></svg>
 <div class="t lbl" style="left:373px;top:149px">Documents</div>
 <svg class="abs" style="left:583px;top:62px;overflow:visible" width="84" height="80" viewBox="0 0 84 80"><use href="#fold"/><g fill="none" stroke="#fdd8bd" stroke-width="1.2" stroke-opacity=".9"><path d="M38.3 27.5H46.2V43H50.8L42.2 57.5L33.5 43H38.3Z"/><path d="M31.4 63.6H52.7" stroke-width="1.4"/></g></svg>
 <div class="t lbl" style="left:545px;top:149px">Downloads</div>
 <svg class="abs" style="left:755px;top:62px;overflow:visible" width="84" height="80" viewBox="0 0 84 80"><use href="#fold"/><g fill="#fdd8bd" fill-opacity=".9"><ellipse cx="30" cy="59" rx="4.6" ry="4"/><ellipse cx="49.5" cy="56.5" rx="4.6" ry="4"/><path d="M32.8 59V32.3L54.2 27.5V56.5H51.8V34L35.2 37.2V59Z"/></g></svg>
 <div class="t lbl" style="left:717px;top:149px">Music</div>
 <svg class="abs" style="left:239px;top:191px;overflow:visible" width="84" height="80" viewBox="0 0 84 80"><use href="#fold"/><g fill="#fdd8bd" fill-opacity=".9"><circle cx="53.7" cy="35.9" r="6"/><path d="M22.5 62.6L34.6 42L40 50.5L43.7 46L53.7 62.6Z"/></g></svg>
 <div class="t lbl" style="left:201px;top:278px">Pictures</div>
 <svg class="abs" style="left:411px;top:191px;overflow:visible" width="84" height="80" viewBox="0 0 84 80"><use href="#fold"/><g fill="none" stroke="#fdd8bd" stroke-width="1.4" stroke-opacity=".9"><circle cx="53.5" cy="34.4" r="5.3"/><circle cx="27.6" cy="46.7" r="5.3"/><circle cx="53.5" cy="58.6" r="5.3"/><path d="M32.4 44.4L48.7 36.6M32.4 49L48.7 56.4"/></g></svg>
 <div class="t lbl" style="left:373px;top:278px">Public</div>
 <svg class="abs" style="left:583px;top:191px;overflow:visible" width="84" height="80" viewBox="0 0 84 80"><use href="#fold"/></svg>
 <div class="t lbl" style="left:545px;top:278px">snap</div>
 <svg class="abs" style="left:755px;top:191px;overflow:visible" width="84" height="80" viewBox="0 0 84 80"><use href="#fold"/><g fill="none" stroke="#fdd8bd" stroke-width="1.2" stroke-opacity=".9"><rect x="29.2" y="27.3" width="9.6" height="33.8"/><path d="M38.8 31.5H35.5M38.8 35.5H36.5M38.8 39.5H35.5M38.8 43.5H36.5M38.8 47.5H35.5M38.8 51.5H36.5M38.8 55.5H35.5"/><path d="M44.3 27.3H52.2V49.2L48.2 60.8L44.3 49.2Z"/></g><rect x="44.3" y="30.5" width="7.9" height="18.7" fill="#fdd8bd" fill-opacity=".75"/></svg>
 <div class="t lbl" style="left:717px;top:278px">Templates</div>
 <svg class="abs" style="left:239px;top:320px;overflow:visible" width="84" height="80" viewBox="0 0 84 80"><use href="#fold"/><g fill="none" stroke="#fdd8bd" stroke-width="1.2" stroke-opacity=".9"><path d="M24.2 31.2V60M59.4 31.2V60M29.8 31.5H53.8V59.7H29.8ZM29.8 45.6H53.8"/></g><g fill="#fdd8bd" fill-opacity=".85"><path d="M24.2 33h5.6v2.5h-5.6zM24.2 38.5h5.6v2.5h-5.6zM24.2 44h5.6v2.5h-5.6zM24.2 49.5h5.6v2.5h-5.6zM24.2 55h5.6v2.5h-5.6zM53.8 33h5.6v2.5h-5.6zM53.8 38.5h5.6v2.5h-5.6zM53.8 44h5.6v2.5h-5.6zM53.8 49.5h5.6v2.5h-5.6zM53.8 55h5.6v2.5h-5.6z"/></g></svg>
 <div class="t lbl" style="left:201px;top:407px">Videos</div>
</div>

</body></html>
